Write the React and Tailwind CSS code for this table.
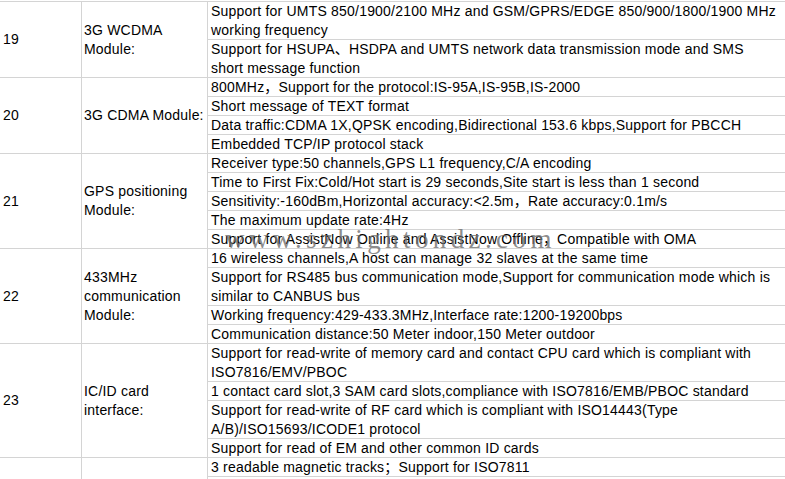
const rows = [
  {
    no: "19",
    name: ["3G WCDMA", "Module:"],
    items: [
      ["Support for UMTS 850/1900/2100 MHz and GSM/GPRS/EDGE 850/900/1800/1900 MHz", "working frequency"],
      ["Support for HSUPA、HSDPA and UMTS network data transmission mode and SMS", "short message function"],
    ],
  },
  {
    no: "20",
    name: ["3G CDMA Module:"],
    items: [
      ["800MHz，Support for the protocol:IS-95A,IS-95B,IS-2000"],
      ["Short message of TEXT format"],
      ["Data traffic:CDMA 1X,QPSK encoding,Bidirectional 153.6 kbps,Support for PBCCH"],
      ["Embedded TCP/IP protocol stack"],
    ],
  },
  {
    no: "21",
    name: ["GPS positioning", "Module:"],
    items: [
      ["Receiver type:50 channels,GPS L1 frequency,C/A encoding"],
      ["Time to First Fix:Cold/Hot start is 29 seconds,Site start is less than 1 second"],
      ["Sensitivity:-160dBm,Horizontal accuracy:<2.5m，Rate accuracy:0.1m/s"],
      ["The maximum update rate:4Hz"],
      ["Support for AssistNow Online and AssistNow Offline，Compatible with OMA"],
    ],
  },
  {
    no: "22",
    name: ["433MHz", "communication", "Module:"],
    items: [
      ["16 wireless channels,A host can manage 32 slaves at the same time"],
      ["Support for RS485 bus communication mode,Support for communication mode which is", "similar to CANBUS bus"],
      ["Working frequency:429-433.3MHz,Interface rate:1200-19200bps"],
      ["Communication distance:50 Meter indoor,150 Meter outdoor"],
    ],
  },
  {
    no: "23",
    name: ["IC/ID card", "interface:"],
    items: [
      ["Support for read-write of memory card and contact CPU card which is compliant with", "ISO7816/EMV/PBOC"],
      ["1 contact card slot,3 SAM card slots,compliance with ISO7816/EMB/PBOC standard"],
      ["Support for read-write of RF card which is compliant with ISO14443(Type", "A/B)/ISO15693/ICODE1 protocol"],
      ["Support for read of EM and other common ID cards"],
    ],
  },
  {
    // next row continues below the fold; its number and name sit out of view
    no: "",
    name: [""],
    items: [
      ["3 readable magnetic tracks；Support for ISO7811"],
      [""],
      [""],
      [""],
    ],
  },
];

function SubRow({ lines, last }) {
  const tall = lines.length > 1;
  let h = tall ? "h-[38px] leading-[18.5px]" : "h-[19px] leading-[18px]";
  if (last) h = tall ? "h-[37px] leading-[18.5px]" : "h-[18px] leading-[18px]";
  return (
    <div className={`pl-[3px] whitespace-nowrap ${h} ${last ? "" : "border-b border-[#d4d4d4]"}`}>
      {lines.map((l, i) => (
        <div key={i}>{l}</div>
      ))}
    </div>
  );
}

export default function App() {
  return (
    <div
      className="relative w-[785px] h-[479px] overflow-hidden bg-white text-black text-[14px] tracking-[0.2px]"
      style={{ fontFamily: '"Liberation Sans", Arial, "Noto Sans CJK SC", sans-serif' }}
    >
      <div className="mt-[1px] border-t border-[#d4d4d4] w-[830px]">
        {rows.map((r, idx) => (
          <div key={idx} className="flex border-b border-[#d4d4d4]">
            <div className="w-[82px] shrink-0 border-r border-[#d4d4d4] flex items-center pl-[3px]">
              {r.no}
            </div>
            <div className="w-[126px] shrink-0 border-r border-[#d4d4d4] flex flex-col justify-center pl-[2px] leading-[19px]">
              {r.name.map((n, i) => (
                <div key={i} className="whitespace-nowrap">{n}</div>
              ))}
            </div>
            <div className="flex-1 flex flex-col">
              {r.items.map((lines, i) => (
                <SubRow key={i} lines={lines} last={i === r.items.length - 1} />
              ))}
            </div>
          </div>
        ))}
      </div>

      <div
        className="absolute left-[225px] top-[219px] text-[27px] tracking-[4.4px] text-[#6e6e6e]/80 whitespace-nowrap pointer-events-none"
        style={{ fontFamily: '"Liberation Serif", "Times New Roman", serif' }}
      >
        www.szhightondz.com
      </div>
    </div>
  );
}
